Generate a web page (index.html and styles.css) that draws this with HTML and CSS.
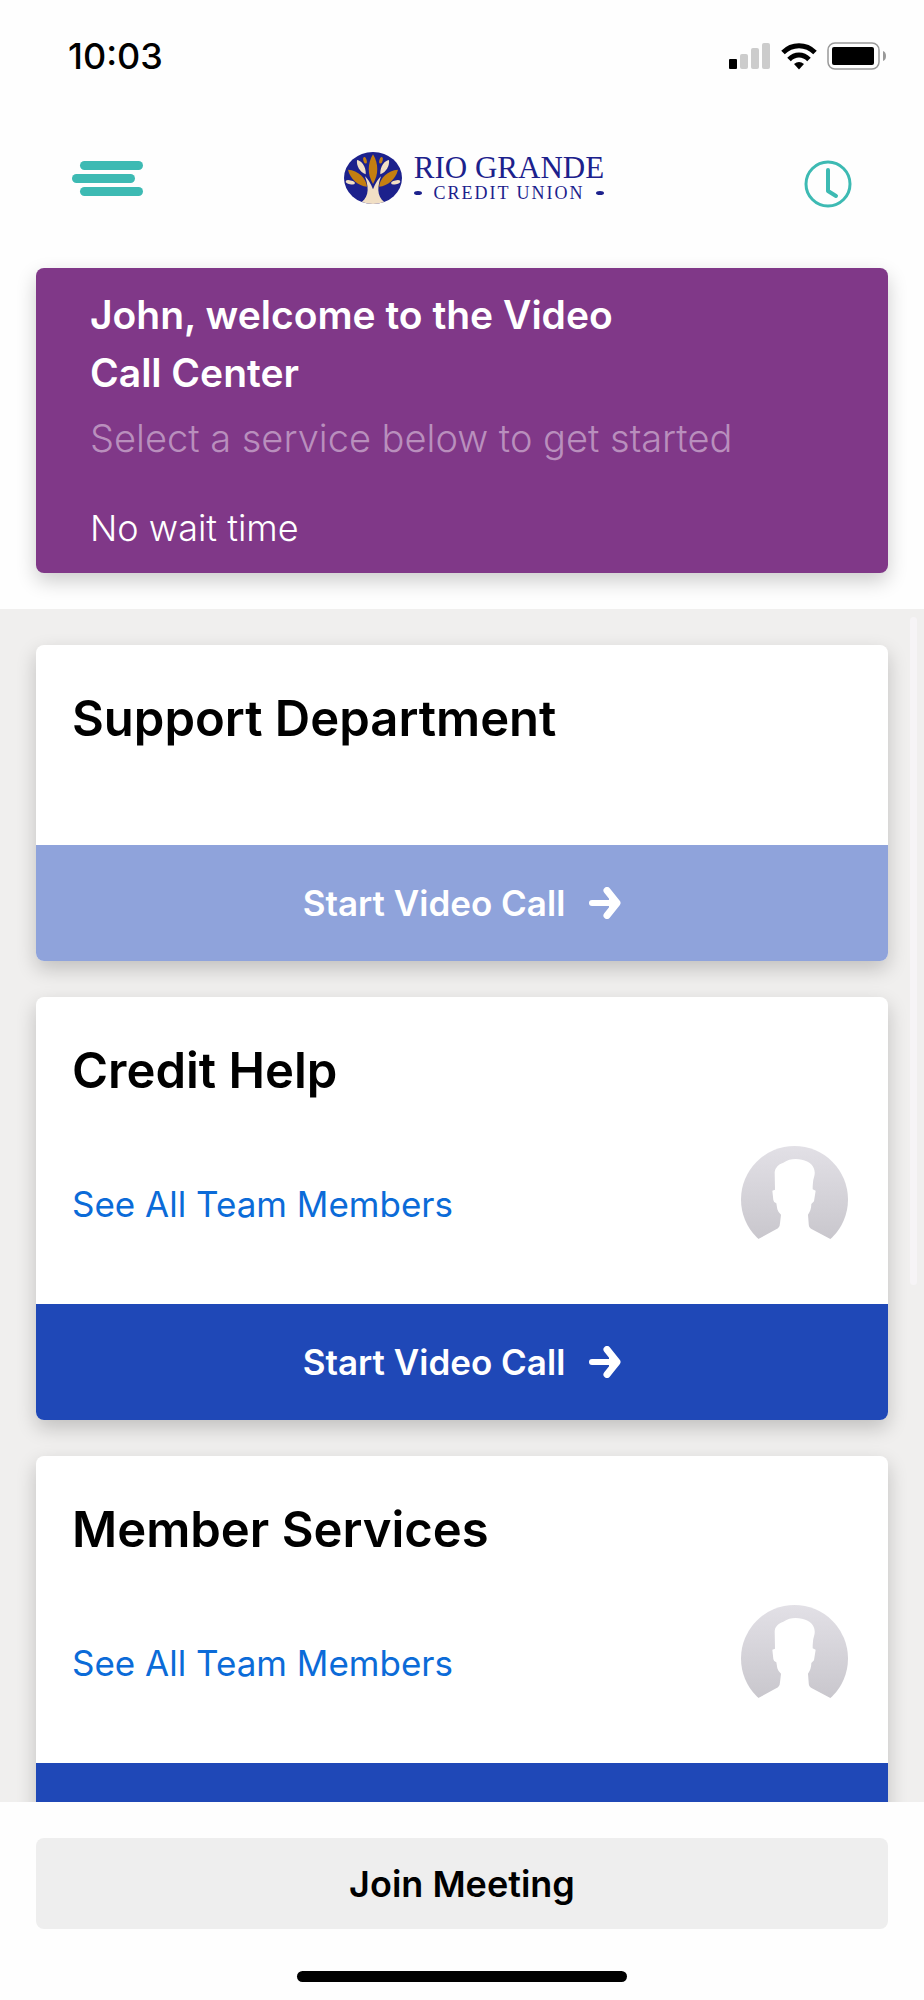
FILE: index.html
```html
<!DOCTYPE html>
<html lang="en">
  <head>
    <meta charset="UTF-8" />
    <meta name="viewport" content="width=device-width, initial-scale=1.0" />
    <title>Video Call Center</title>
    <link rel="stylesheet" href="styles.css">
  </head>
  <body>
    <!-- shared icons -->
    <svg class="sprite" aria-hidden="true">
      <defs>
        <linearGradient id="avatarFill" x1="0" y1="0" x2="0" y2="1">
          <stop offset="0" stop-color="#e2e0e6" />
          <stop offset="1" stop-color="#c5c3c9" />
        </linearGradient>
      </defs>
      <symbol id="arrow" viewBox="0 0 32 32">
        <path d="M3 16h24" stroke-width="6" />
        <path d="M18 3.500 28 16 18 28.500" stroke-width="7" />
        <path d="M20 8v16l8-8z" fill="currentColor" stroke="none" />
      </symbol>
      <symbol id="avatar" viewBox="0 0 321 321">
        <circle cx="160.500" cy="160.500" r="160.500" fill="url(#avatarFill)" />
        <path fill="#fff" d="M52 279 111 247Q117 243 117 232L120 206Q110 196 109 190L106 172Q98 170 97 162L94 134 102 131 101 78Q103 58 127 50C140 42 150 39 164 39C190 39 212 50 218 66Q224 78 219 94 215 106 215 130L224 134 219 166 211 174Q211 192 201 206L203 232Q203 245 210 248L268 279 290 321H30z" />
      </symbol>
    </svg>

    <div class="status-bar">
      <span class="time">10:03</span>
      <div class="status-icons">
        <svg width="42" height="28" viewBox="0 0 42 28">
          <rect x="0" y="17" width="8" height="10" rx="1" />
          <g fill="#ccc">
            <rect x="11" y="12" width="8" height="15" rx="2" />
            <rect x="22" y="6" width="8" height="21" rx="2" />
            <rect x="33" y="1" width="8" height="26" rx="2" />
          </g>
        </svg>
        <svg width="36" height="28" viewBox="0 0 36 28">
          <g fill="none" stroke="#000" stroke-width="5">
            <path d="M2 10.500C11 1.500 25 1.500 34 10.500" />
            <path d="M8 17.500C14 11.500 22 11.500 28 17.500" />
          </g>
          <path d="M13 22q5-4 10 0l-5 5.500z" />
        </svg>
        <svg width="60" height="28" viewBox="0 0 60 28">
          <rect x="1" y="1" width="51" height="26" rx="7" fill="none" stroke="#999" stroke-width="1.500" />
          <rect x="5" y="5" width="42" height="18" rx="2" />
          <path d="M56 9q3 1 3 5t-3 5z" fill="#999" />
        </svg>
      </div>
    </div>

    <header class="header">
      <button class="icon-button" aria-label="Menu">
        <svg width="72" height="37" viewBox="0 0 72 37" fill="#3dbab3">
          <rect x="8" y="1" width="63" height="9" rx="4.500" />
          <rect x="0" y="14" width="63" height="9" rx="4.500" />
          <rect x="8" y="27" width="63" height="9" rx="4.500" />
        </svg>
      </button>

      <a class="logo" href="#">
        <svg width="58" height="52" viewBox="0 0 174 156">
          <defs>
            <clipPath id="oval"><ellipse cx="87" cy="78" rx="87" ry="78" /></clipPath>
          </defs>
          <g clip-path="url(#oval)">
            <rect width="174" height="156" fill="#1c218c" />
            <g fill="#f1dfc5">
              <path d="M46 156C70 140 79 118 63 73Q76 84 87 112 98 84 111 73C95 118 104 140 128 156z" />
              <path d="M39 24C53 25 67 46 65 67 47 60 37 42 39 24z" />
              <path d="M135 24C121 25 107 46 109 67 127 60 137 42 135 24z" />
              <ellipse cx="19" cy="91" rx="14" ry="6" transform="rotate(12 19 91)" />
              <ellipse cx="155" cy="91" rx="14" ry="6" transform="rotate(-12 155 91)" />
            </g>
            <g fill="#c47f11">
              <path d="M87 7C104 35 104 68 87 96 70 68 70 35 87 7z" />
              <path d="M12 53C43 55 66 78 69 104 42 101 19 82 12 53z" />
              <path d="M162 53C131 55 108 78 105 104 132 101 155 82 162 53z" />
              <ellipse cx="63" cy="25" rx="5" ry="10" transform="rotate(-15 63 25)" />
              <ellipse cx="111" cy="25" rx="5" ry="10" transform="rotate(15 111 25)" />
            </g>
          </g>
        </svg>
        <span class="logo-text">
          <span class="logo-name">RIO GRANDE</span>
          <span class="logo-sub">CREDIT UNION</span>
        </span>
      </a>

      <button class="icon-button clock" aria-label="History">
        <svg width="48" height="48" viewBox="0 0 48 48" fill="none" stroke="#3dbab3" stroke-linecap="round" stroke-linejoin="round">
          <circle cx="24" cy="24" r="22" stroke-width="3" />
          <path d="M24 10v21l8 5" stroke-width="4" />
        </svg>
      </button>
    </header>

    <section class="welcome">
      <h1>John, welcome to the Video<br />Call Center</h1>
      <p class="hint">Select a service below to get started</p>
      <p class="wait">No wait time</p>
    </section>

    <main class="list-wrap">
      <div class="list">
        <article class="card">
          <div class="card-body">
            <h2>Support Department</h2>
          </div>
          <button class="call-button" disabled>
            Start Video Call
            <svg class="arrow"><use href="#arrow" /></svg>
          </button>
        </article>

        <article class="card">
          <div class="card-body">
            <h2>Credit Help</h2>
            <div class="team">
              <a href="#">See All Team Members</a>
              <svg class="avatar"><use href="#avatar" /></svg>
            </div>
          </div>
          <button class="call-button">
            Start Video Call
            <svg class="arrow"><use href="#arrow" /></svg>
          </button>
        </article>

        <article class="card">
          <div class="card-body">
            <h2>Member Services</h2>
            <div class="team">
              <a href="#">See All Team Members</a>
              <svg class="avatar"><use href="#avatar" /></svg>
            </div>
          </div>
          <button class="call-button">
            Start Video Call
            <svg class="arrow"><use href="#arrow" /></svg>
          </button>
        </article>
      </div>
      <div class="scroll-thumb"></div>
    </main>

    <footer class="footer">
      <button class="join-button">Join Meeting</button>
      <div class="home-bar"></div>
    </footer>
  </body>
</html>
```

FILE: styles.css
```css
* {
  box-sizing: border-box;
}

body {
  display: flex;
  flex-direction: column;
  height: 100vh;
  margin: 0;
  background: #fefefe;
  color: #000;
  font-family: Inter, "Open Sans", sans-serif;
  overflow: hidden;
}

h1,
h2,
p {
  margin: 0;
}

button {
  border: 0;
  padding: 0;
  font-family: inherit;
  cursor: pointer;
}

svg {
  display: block;
}

.sprite {
  position: absolute;
  width: 0;
  height: 0;
}

/* status bar */
.status-bar {
  display: flex;
  flex: none;
  justify-content: space-between;
  align-items: center;
  height: 112px;
  padding: 0 37px 0 68px;
}

.time {
  font-size: 36px;
  font-weight: 500;
}

.status-icons {
  display: flex;
  gap: 10px;
}

/* header */
.header {
  display: flex;
  flex: none;
  justify-content: space-between;
  align-items: center;
  height: 156px;
  padding: 0 72px 24px;
}

.icon-button {
  background: none;
}

.clock {
  margin-top: 12px;
}

.logo {
  display: flex;
  align-items: center;
  gap: 12px;
  color: #1c218c;
  font-family: "Liberation Serif", serif;
  text-decoration: none;
}

.logo-text {
  display: flex;
  flex-direction: column;
}

.logo-name {
  font-size: 31px;
  line-height: 30px;
}

.logo-sub {
  display: flex;
  align-items: center;
  justify-content: space-between;
  font-size: 18px;
  line-height: 20px;
  letter-spacing: 2px;
}

.logo-sub::before,
.logo-sub::after {
  content: "";
  width: 8px;
  height: 4px;
  border-radius: 50%;
  background: #1c218c;
}

/* welcome banner */
.welcome {
  flex: none;
  margin: 0 36px 36px;
  padding: 18px 54px 22px;
  border-radius: 8px;
  background: #803888;
  color: #fff;
  box-shadow: 0 8px 20px rgba(0, 0, 0, 0.2);
}

.welcome h1 {
  font-size: 39px;
  font-weight: 600;
  line-height: 58px;
}

.hint {
  margin-bottom: 31px;
  color: #b98fbd;
  font-size: 38px;
  font-weight: 300;
  line-height: 72px;
}

.wait {
  font-size: 36px;
  font-weight: 300;
  line-height: 46px;
}

/* department list */
.list-wrap {
  position: relative;
  flex: 1;
  min-height: 0;
}

.list {
  display: flex;
  flex-direction: column;
  gap: 36px;
  height: 100%;
  padding: 36px;
  background: #f0efee;
  overflow-y: auto;
}

.list::-webkit-scrollbar {
  display: none;
}

.card {
  flex: none;
  border-radius: 8px;
  background: #fff;
  box-shadow: 0 8px 20px rgba(0, 0, 0, 0.2);
}

.card-body {
  min-height: 200px;
  padding: 41px 40px 51px 36px;
}

.card h2 {
  font-size: 49px;
  font-weight: 600;
  line-height: 66px;
}

.team {
  display: flex;
  justify-content: space-between;
  align-items: center;
  margin-top: 42px;
}

.team a {
  padding-top: 8px;
  color: #0b6bd8;
  font-size: 35px;
  text-decoration: none;
}

.avatar {
  width: 107px;
  height: 107px;
}

.call-button {
  display: flex;
  justify-content: center;
  align-items: center;
  gap: 24px;
  width: 100%;
  height: 116px;
  border-radius: 0 0 8px 8px;
  background: #1f48b7;
  color: #fff;
  font-size: 35px;
  font-weight: 600;
  line-height: 34px;
}

.call-button:disabled {
  background: #8fa3db;
  cursor: default;
}

.arrow {
  width: 32px;
  height: 32px;
  fill: none;
  stroke: currentColor;
  stroke-linecap: round;
  stroke-linejoin: round;
}

.scroll-thumb {
  position: absolute;
  top: 8px;
  right: 7px;
  width: 7px;
  height: 56%;
  border-radius: 4px;
  background: #f6f4f6;
}

/* footer */
.footer {
  display: flex;
  flex: none;
  flex-direction: column;
  align-items: center;
  gap: 42px;
  padding: 36px 36px 18px;
}

.join-button {
  width: 100%;
  height: 91px;
  border-radius: 8px;
  background: #eee;
  color: #000;
  font-size: 36px;
  font-weight: 600;
}

.home-bar {
  width: 330px;
  height: 11px;
  border-radius: 6px;
  background: #000;
}
```
